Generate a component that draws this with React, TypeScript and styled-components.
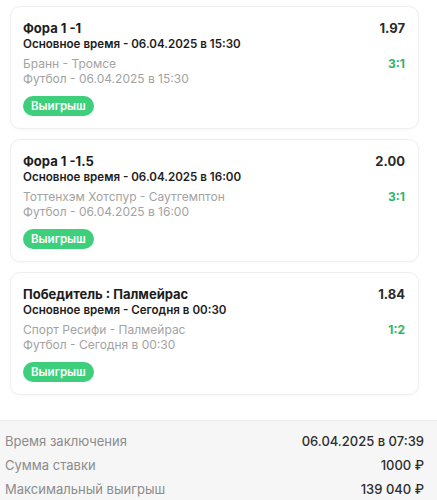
import React, { FC } from 'react'
import styled, { createGlobalStyle } from 'styled-components'

type Bet = {
  title: string
  period: string
  odds: string
  teams: string
  sport: string
  score: string
}

const bets: Bet[] = [
  {
    title: 'Фора 1 -1',
    period: 'Основное время - 06.04.2025 в 15:30',
    odds: '1.97',
    teams: 'Бранн - Тромсе',
    sport: 'Футбол - 06.04.2025 в 15:30',
    score: '3:1',
  },
  {
    title: 'Фора 1 -1.5',
    period: 'Основное время - 06.04.2025 в 16:00',
    odds: '2.00',
    teams: 'Тоттенхэм Хотспур - Саутгемптон',
    sport: 'Футбол - 06.04.2025 в 16:00',
    score: '3:1',
  },
  {
    title: 'Победитель : Палмейрас',
    period: 'Основное время - Сегодня в 00:30',
    odds: '1.84',
    teams: 'Спорт Ресифи - Палмейрас',
    sport: 'Футбол - Сегодня в 00:30',
    score: '1:2',
  },
]

const summary = [
  { label: 'Время заключения', value: '06.04.2025 в 07:39' },
  { label: 'Сумма ставки', value: '1000 ₽' },
  { label: 'Максимальный выигрыш', value: '139 040 ₽' },
]

const BetCard: FC<{ bet: Bet }> = ({ bet }) => (
  <Card>
    <Row>
      <Title>{bet.title}</Title>
      <Odds>{bet.odds}</Odds>
    </Row>
    <Period>{bet.period}</Period>
    <Details>
      <Row>
        <Muted>{bet.teams}</Muted>
        <Score>{bet.score}</Score>
      </Row>
      <Muted>{bet.sport}</Muted>
    </Details>
    <Badge>Выигрыш</Badge>
  </Card>
)

export default function App() {
  return (
    <>
      <GlobalStyle />
      <Page>
        <CardList>
          {bets.map((bet) => (
            <BetCard key={bet.title} bet={bet} />
          ))}
        </CardList>
        <Summary>
          {summary.map((item) => (
            <SummaryRow key={item.label}>
              <SummaryLabel>{item.label}</SummaryLabel>
              <SummaryValue>{item.value}</SummaryValue>
            </SummaryRow>
          ))}
        </Summary>
      </Page>
    </>
  )
}

const GlobalStyle = createGlobalStyle`
  html, body {
    margin: 0;
    padding: 0;
    background: #ffffff;
  }
  body {
    font-family: Inter, 'Noto Sans', sans-serif;
    -webkit-font-smoothing: antialiased;
  }
  * {
    box-sizing: border-box;
  }
`

const Page = styled.div`
  display: flex;
  flex-direction: column;
  width: 437px;
  min-height: 500px;
`

const CardList = styled.div`
  display: flex;
  flex-direction: column;
  gap: 10px;
  padding: 6px 18px 0 10px;
`

const Card = styled.div`
  display: flex;
  flex-direction: column;
  align-items: flex-start;
  height: 123px;
  padding: 13px 13px 12px 12px;
  border: 1px solid #efefef;
  border-radius: 10px;
  background: #ffffff;
  box-shadow: 0 1px 3px rgba(0, 0, 0, 0.03);
`

const Row = styled.div`
  display: flex;
  align-items: center;
  justify-content: space-between;
  width: 100%;
`

const Title = styled.div`
  font-size: 13px;
  line-height: 16px;
  font-weight: 700;
  color: #1c1c1c;
`

const Odds = styled.div`
  font-size: 13px;
  line-height: 16px;
  font-weight: 700;
  color: #2a2a2a;
`

const Period = styled.div`
  font-size: 11.6px;
  line-height: 17px;
  font-weight: 600;
  color: #1c1c1c;
`

const Details = styled.div`
  display: flex;
  flex-direction: column;
  width: 100%;
  margin-top: 3px;
`

const Muted = styled.div`
  font-size: 12px;
  line-height: 15px;
  color: #a3a3a3;
`

const Score = styled.div`
  font-size: 12px;
  line-height: 15px;
  font-weight: 700;
  color: #2fb56a;
`

const Badge = styled.div`
  display: flex;
  align-items: center;
  justify-content: center;
  height: 22px;
  margin-top: 10px;
  padding: 0 8px;
  border-radius: 11px;
  background: #3dcf7c;
  color: #ffffff;
  font-size: 11.5px;
  font-weight: 600;
`

const Summary = styled.div`
  display: flex;
  flex-direction: column;
  flex: 1;
  margin-top: 25px;
  padding: 8px 13px 8px 5px;
  border-top: 1px solid #ececec;
  background: #f6f6f6;
`

const SummaryRow = styled.div`
  display: flex;
  align-items: center;
  justify-content: space-between;
  height: 24px;
`

const SummaryLabel = styled.div`
  font-size: 13px;
  color: #8c8c8c;
`

const SummaryValue = styled.div`
  font-size: 13px;
  font-weight: 500;
  color: #2e2e2e;
`
